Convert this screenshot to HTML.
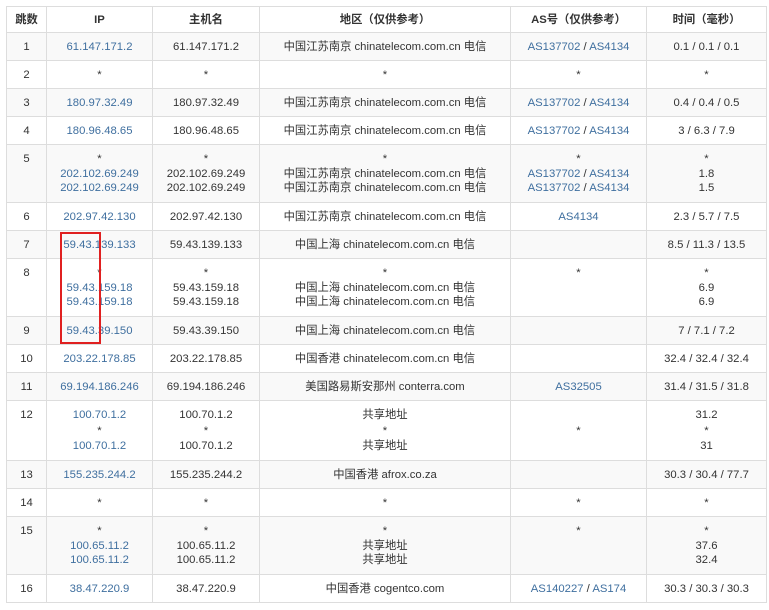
<!DOCTYPE html>
<html><head><meta charset="utf-8"><style>
body{margin:0;background:#fff;width:769px;height:610px;overflow:hidden;position:relative;font-family:"Liberation Sans","Noto Sans CJK SC",sans-serif;font-size:11.3px;color:#333}
table{position:absolute;left:6px;top:6px;border-collapse:collapse;table-layout:fixed;width:760px}
td,th{border:1px solid #ddd;padding:7px 2px 0;line-height:14.5px;text-align:center;vertical-align:top;white-space:nowrap;overflow:hidden;height:20px;box-sizing:content-box}
th{font-weight:bold;height:19px;padding-top:6px}
tbody tr:nth-child(odd) td{background:#f9f9f9}
a{color:#3f6f9f;text-decoration:none}
.m td{height:50px}
.r12 td{line-height:15.5px;height:52px}
.box{position:absolute;left:60px;top:232px;width:37px;height:108px;border:2px solid #e02020}
</style></head><body>
<table>
<colgroup><col style="width:40px"><col style="width:106px"><col style="width:107px"><col style="width:251px"><col style="width:136px"><col style="width:120px"></colgroup>
<thead><tr><th>跳数</th><th>IP</th><th>主机名</th><th>地区（仅供参考）</th><th>AS号（仅供参考）</th><th>时间（毫秒）</th></tr></thead>
<tbody>
<tr><td>1</td><td><a>61.147.171.2</a></td><td>61.147.171.2</td><td>中国江苏南京 chinatelecom.com.cn 电信</td><td><a>AS137702</a> / <a>AS4134</a></td><td>0.1 / 0.1 / 0.1</td></tr>
<tr><td>2</td><td>*</td><td>*</td><td>*</td><td>*</td><td>*</td></tr>
<tr><td>3</td><td><a>180.97.32.49</a></td><td>180.97.32.49</td><td>中国江苏南京 chinatelecom.com.cn 电信</td><td><a>AS137702</a> / <a>AS4134</a></td><td>0.4 / 0.4 / 0.5</td></tr>
<tr><td>4</td><td><a>180.96.48.65</a></td><td>180.96.48.65</td><td>中国江苏南京 chinatelecom.com.cn 电信</td><td><a>AS137702</a> / <a>AS4134</a></td><td>3 / 6.3 / 7.9</td></tr>
<tr class="m"><td>5</td><td>*<br><a>202.102.69.249</a><br><a>202.102.69.249</a></td><td>*<br>202.102.69.249<br>202.102.69.249</td><td>*<br>中国江苏南京 chinatelecom.com.cn 电信<br>中国江苏南京 chinatelecom.com.cn 电信</td><td>*<br><a>AS137702</a> / <a>AS4134</a><br><a>AS137702</a> / <a>AS4134</a></td><td>*<br>1.8<br>1.5</td></tr>
<tr><td>6</td><td><a>202.97.42.130</a></td><td>202.97.42.130</td><td>中国江苏南京 chinatelecom.com.cn 电信</td><td><a>AS4134</a></td><td>2.3 / 5.7 / 7.5</td></tr>
<tr><td>7</td><td><a>59.43.139.133</a></td><td>59.43.139.133</td><td>中国上海 chinatelecom.com.cn 电信</td><td></td><td>8.5 / 11.3 / 13.5</td></tr>
<tr class="m"><td>8</td><td>*<br><a>59.43.159.18</a><br><a>59.43.159.18</a></td><td>*<br>59.43.159.18<br>59.43.159.18</td><td>*<br>中国上海 chinatelecom.com.cn 电信<br>中国上海 chinatelecom.com.cn 电信</td><td>*</td><td>*<br>6.9<br>6.9</td></tr>
<tr><td>9</td><td><a>59.43.39.150</a></td><td>59.43.39.150</td><td>中国上海 chinatelecom.com.cn 电信</td><td></td><td>7 / 7.1 / 7.2</td></tr>
<tr><td>10</td><td><a>203.22.178.85</a></td><td>203.22.178.85</td><td>中国香港 chinatelecom.com.cn 电信</td><td></td><td>32.4 / 32.4 / 32.4</td></tr>
<tr><td>11</td><td><a>69.194.186.246</a></td><td>69.194.186.246</td><td>美国路易斯安那州 conterra.com</td><td><a>AS32505</a></td><td>31.4 / 31.5 / 31.8</td></tr>
<tr class="r12"><td>12</td><td><a>100.70.1.2</a><br>*<br><a>100.70.1.2</a></td><td>100.70.1.2<br>*<br>100.70.1.2</td><td>共享地址<br>*<br>共享地址</td><td><br>*</td><td>31.2<br>*<br>31</td></tr>
<tr><td>13</td><td><a>155.235.244.2</a></td><td>155.235.244.2</td><td>中国香港 afrox.co.za</td><td></td><td>30.3 / 30.4 / 77.7</td></tr>
<tr><td>14</td><td>*</td><td>*</td><td>*</td><td>*</td><td>*</td></tr>
<tr class="m"><td>15</td><td>*<br><a>100.65.11.2</a><br><a>100.65.11.2</a></td><td>*<br>100.65.11.2<br>100.65.11.2</td><td>*<br>共享地址<br>共享地址</td><td>*</td><td>*<br>37.6<br>32.4</td></tr>
<tr><td>16</td><td><a>38.47.220.9</a></td><td>38.47.220.9</td><td>中国香港 cogentco.com</td><td><a>AS140227</a> / <a>AS174</a></td><td>30.3 / 30.3 / 30.3</td></tr>
</tbody></table>
<div class="box"></div>
</body></html>
